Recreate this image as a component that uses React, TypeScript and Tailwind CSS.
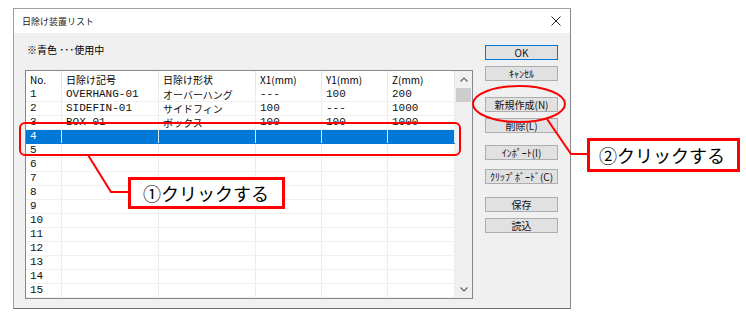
import React from "react";

const cols = [36, 97, 97, 66, 66, 67];

type Row = string[];
const data: Row[] = [
  ["1", "OVERHANG-01", "オーバーハング", "---", "100", "200"],
  ["2", "SIDEFIN-01", "サイドフィン", "100", "---", "1000"],
  ["3", "BOX-01", "ボックス", "100", "100", "1000"],
];

function Btn({ label, primary, mt }: { label: string; primary?: boolean; mt: string }) {
  return (
    <div
      className={`${mt} h-[15px] w-[73px] flex items-center justify-center whitespace-nowrap text-[10px] leading-none text-[#111] bg-[#e1e1e1] border ${
        primary ? "border-[#0078d7]" : "border-[#adadad]"
      }`}
    >
      {label}
    </div>
  );
}

export default function App() {
  const rows: Row[] = [];
  for (let i = 0; i < 15; i++) {
    rows.push(data[i] ?? [String(i + 1), "", "", "", "", ""]);
  }
  const jp = { fontFamily: '"Noto Sans CJK JP", "Noto Sans", sans-serif' };
  const mono = { fontFamily: '"Liberation Mono", "Noto Sans CJK JP", monospace' };
  return (
    <div className="relative w-[746px] h-[319px] bg-white overflow-hidden" style={jp}>
      <div className="pt-[8px] pl-[13px]">
        <div className="w-[558px] h-[301px] border border-[#a0a0a0] border-b-[#6e6e6e] border-r-[#8a8a8a] bg-[#f0f0f0] flex flex-col">
          {/* title bar */}
          <div className="h-[24px] bg-white flex items-center justify-between pl-[8px] pr-[9px]">
            <span className="text-[9px] text-[#222] leading-none">日除け装置リスト</span>
            <svg width="10" height="10" viewBox="0 0 10 10">
              <path d="M0.5 0.5 L9.5 9.5 M9.5 0.5 L0.5 9.5" stroke="#222" strokeWidth="1" fill="none" />
            </svg>
          </div>
          {/* body */}
          <div className="flex pl-[11px]">
            <div className="flex flex-col w-[448px] pt-[10px]">
              <div className="h-[14px] leading-[14px] text-[10px] text-black pl-[2px]">※青色 ･･･使用中</div>
              <div className="mt-[13px] h-[229px] border border-[#828790] bg-white flex">
                <div className="w-[429px] flex flex-col">
                  <div className="h-[17px] flex">
                    {["No.", "日除け記号", "日除け形状", "X1(mm)", "Y1(mm)", "Z(mm)"].map((h, i) => (
                      <div
                        key={i}
                        className="h-full border-r border-[#e5e5e5] flex items-center pl-[4px] text-[10px] text-black leading-none"
                        style={{ width: cols[i] }}
                      >
                        {h}
                      </div>
                    ))}
                  </div>
                  {rows.map((r, ri) => {
                    const sel = ri === 3;
                    return (
                      <div
                        key={ri}
                        className={`h-[14px] flex border-b ${sel ? "bg-[#0078d7] border-[#0078d7]" : "border-[#f0f0f0]"}`}
                      >
                        {r.map((c, ci) => (
                          <div
                            key={ci}
                            className={`h-full border-r flex items-center pl-[4px] leading-none whitespace-nowrap ${
                              sel ? "border-[#d8e8f8] text-white" : "border-[#ececec] text-[#111]"
                            } ${ci === 2 ? "text-[10px]" : "text-[11px]"}`}
                            style={{ width: cols[ci], ...(ci === 2 ? jp : mono) }}
                          >
                            {c}
                          </div>
                        ))}
                      </div>
                    );
                  })}
                </div>
                {/* scrollbar */}
                <div className="w-[17px] bg-[#f0f0f0] flex flex-col">
                  <div className="h-[17px] flex items-center justify-center">
                    <svg width="8" height="5" viewBox="0 0 8 5">
                      <path d="M0.5 4.5 L4 1 L7.5 4.5" stroke="#606060" strokeWidth="1.2" fill="none" />
                    </svg>
                  </div>
                  <div className="mx-[1px] h-[14px] bg-[#cdcdcd]" />
                  <div className="flex-1" />
                  <div className="h-[17px] flex items-center justify-center">
                    <svg width="8" height="5" viewBox="0 0 8 5">
                      <path d="M0.5 0.5 L4 4 L7.5 0.5" stroke="#606060" strokeWidth="1.2" fill="none" />
                    </svg>
                  </div>
                </div>
              </div>
            </div>
            <div className="ml-[12px] pt-[12px] flex flex-col">
              <Btn label="OK" primary mt="mt-0" />
              <Btn label="ｷｬﾝｾﾙ" mt="mt-[6px]" />
              <Btn label="新規作成(N)" mt="mt-[16px]" />
              <Btn label="削除(L)" mt="mt-[6px]" />
              <Btn label="ｲﾝﾎﾟｰﾄ(I)" mt="mt-[12px]" />
              <Btn label="ｸﾘｯﾌﾟﾎﾞｰﾄﾞ(C)" mt="mt-[9px]" />
              <Btn label="保存" mt="mt-[13px]" />
              <Btn label="読込" mt="mt-[6px]" />
            </div>
          </div>
        </div>
      </div>

      {/* annotations */}
      <svg className="absolute left-0 top-0 pointer-events-none" width="746" height="319" viewBox="0 0 746 319">
        <rect x="20" y="123" width="440" height="32" rx="5" ry="5" fill="none" stroke="#ff0000" strokeWidth="2" />
        <path d="M88 155 L111 192 L130 192" fill="none" stroke="#ff0000" strokeWidth="2" />
        <ellipse cx="519" cy="104" rx="46" ry="18" fill="none" stroke="#ff0000" strokeWidth="2" />
        <path d="M547 119 L571 154 L589 154" fill="none" stroke="#ff0000" strokeWidth="2" />
      </svg>
      <div className="absolute left-[128px] top-[177px] w-[157px] h-[32px] border-[3px] border-[#ff0000] bg-white flex items-center pl-[12px] text-[18px] leading-none text-black">
        ①クリックする
      </div>
      <div className="absolute left-[587px] top-[138px] w-[153px] h-[34px] border-[3px] border-[#ff0000] bg-white flex items-center pl-[9px] text-[18px] leading-none text-black">
        ②クリックする
      </div>
    </div>
  );
}
